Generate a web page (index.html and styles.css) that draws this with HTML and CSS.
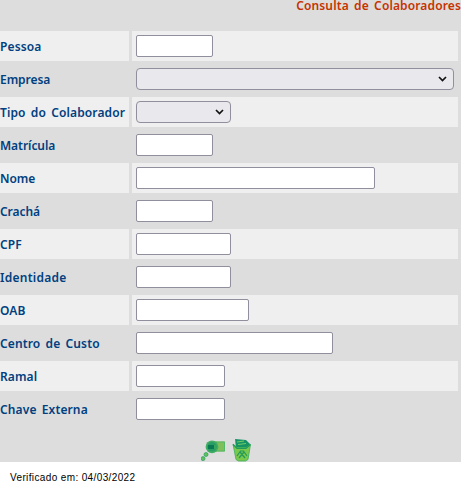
FILE: index.html
```
<!DOCTYPE html>
<html lang="pt-BR">
<head>
<meta charset="utf-8">
<title>Consulta de Colaboradores</title>
<link rel="stylesheet" href="styles.css">
</head>
<body>
<main class="panel">
<h1 class="title">Consulta de Colaboradores</h1>
<form class="form">
<div class="row"><label class="name" for="pessoa">Pessoa</label><div class="cell"><input class="field w77" id="pessoa"></div></div>
<div class="row"><label class="name tight" for="empresa">Empresa</label><div class="cell"><div class="field select w318" id="empresa"><svg class="chevron" viewBox="0 0 9 6"><path d="M1 1l3.5 3.5L8 1"/></svg></div></div></div>
<div class="row"><label class="name" for="tipo">Tipo do Colaborador</label><div class="cell"><div class="field select w95" id="tipo"><svg class="chevron" viewBox="0 0 9 6"><path d="M1 1l3.5 3.5L8 1"/></svg></div></div></div>
<div class="row"><label class="name tight" for="matricula">Matrícula</label><div class="cell"><input class="field w77" id="matricula"></div></div>
<div class="row"><label class="name tight" for="nome">Nome</label><div class="cell"><input class="field w239" id="nome"></div></div>
<div class="row"><label class="name tight" for="cracha">Crachá</label><div class="cell"><input class="field w77" id="cracha"></div></div>
<div class="row"><label class="name" for="cpf">CPF</label><div class="cell"><input class="field w95" id="cpf"></div></div>
<div class="row"><label class="name loose" for="identidade">Identidade</label><div class="cell"><input class="field w95" id="identidade"></div></div>
<div class="row"><label class="name" for="oab">OAB</label><div class="cell"><input class="field w113" id="oab"></div></div>
<div class="row"><label class="name" for="custo">Centro de Custo</label><div class="cell"><input class="field w197" id="custo"></div></div>
<div class="row"><label class="name" for="ramal">Ramal</label><div class="cell"><input class="field w89" id="ramal"></div></div>
<div class="row"><label class="name" for="chave">Chave Externa</label><div class="cell"><input class="field w89" id="chave"></div></div>
</form>
<div class="actions">
<svg class="icon-search" viewBox="0 0 24 22">
<path fill="#80c05a" d="M12 2.5h12v10H12z"/>
<path fill="none" stroke="#55b96b" d="M12 3h11.5v9H12"/>
<circle cx="11" cy="7.8" r="6.4" fill="#43ad62"/>
<circle cx="11" cy="7.8" r="4.8" fill="#2b9d64"/>
<path fill="#087953" d="M7 6h6v4H7z"/>
<path fill="#35a65c" d="M13 6h2v4h-2z"/>
<circle cx="5" cy="15.5" r="2" fill="#5dc45a" stroke="#299a62" stroke-width=".7"/>
<circle cx="2" cy="19.6" r="2" fill="#5dc45a" stroke="#299a62" stroke-width=".7"/>
</svg>
<svg class="icon-trash" viewBox="0 0 20 24">
<path fill="#159365" d="M3 1l11 1 4 4-1 4H4z"/>
<path fill="none" stroke="#75cc67" d="M5 4l7-1M6 6.5l8-1"/>
<path fill="#7ac84c" stroke="#3caf5c" stroke-width=".8" d="M1 6l4 3.5h9l4.5-3L16 21.5 13.5 23h-7L4 21.5z"/>
<path fill="none" stroke="#23995c" stroke-width="1.2" d="M1 6.5l4 4h9l4.5-4M5 18l3.5-5h3l3.5 5M8 14l5 6M12 14l-5 6"/>
</svg>
</div>
</main>
<footer class="footer">Verificado em: 04/03/2022</footer>
</body>
</html>
```
FILE: styles.css
```
* { box-sizing: border-box; }
body { margin: 0; background: #fff; overflow: hidden; }
.panel { height: 462px; background: #ddd; }
.title { margin: 0; height: 31px; font: 600 12px/12px "Noto Sans", sans-serif; color: #c63300; text-align: right; white-space: nowrap; word-spacing: 2px; letter-spacing: .13px; }
.form { display: grid; gap: 3px; width: 458px; }
.row { display: grid; grid-template-columns: 129px 326px; grid-template-rows: 30px; gap: 3px; }
.name { font: 600 12px/29px "Noto Sans", sans-serif; padding-top: 1px; color: #004080; white-space: nowrap; word-spacing: 2px; letter-spacing: .12px; }
.tight { letter-spacing: -.05px; }
.loose { letter-spacing: .25px; }
.cell { display: flex; align-items: center; padding-left: 4px; }
.row:nth-child(odd) > * { background: #efefef; }
.field { height: 22px; margin: 0; padding: 1px 3px; border: 1px solid #8f8f9d; border-radius: 2px; background: #fff; }
.select { display: flex; align-items: center; justify-content: flex-end; padding-right: 6px; border-radius: 4px; background: #e9e9ed; }
.chevron { width: 9px; height: 6px; fill: none; stroke: #111; stroke-width: 1.7; }
.w77 { width: 77px; }
.w89 { width: 89px; }
.w95 { width: 95px; }
.w113 { width: 113px; }
.w197 { width: 197px; }
.w239 { width: 239px; }
.w318 { width: 318px; }
.actions { display: flex; gap: 7px; padding: 14px 0 0 201px; }
.icon-search { width: 24px; height: 22px; margin-top: 1px; }
.icon-trash { width: 20px; height: 24px; }
.footer { padding: 10px 0 0 10px; font: 10px/12px "Liberation Sans", sans-serif; color: #000; letter-spacing: .37px; }
```
